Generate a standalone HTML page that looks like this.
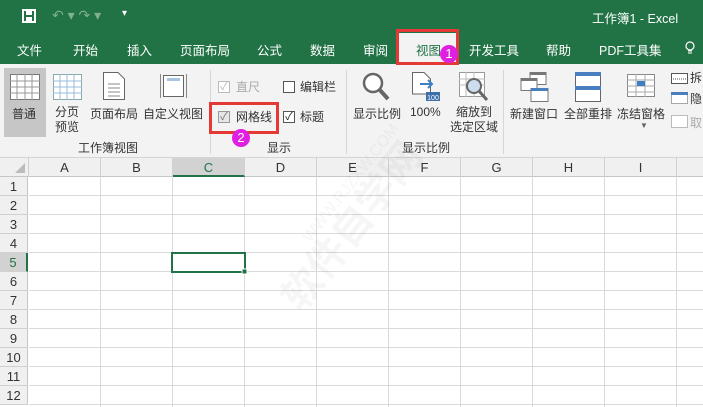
<!DOCTYPE html><html><head><meta charset="utf-8"><style>
*{margin:0;padding:0;box-sizing:border-box}
body{width:703px;height:407px;overflow:hidden;position:relative;background:#fff;font-family:"Liberation Sans","Noto Sans CJK SC",sans-serif;font-size:12px;color:#222}
.a{position:absolute}
.top{left:0;top:0;width:703px;height:64px;background:#217346;color:#fff}
.tab{position:absolute;top:40px;font-size:12.5px;color:#fff}
.rib{left:0;top:64px;width:703px;height:94px;background:#f3f3f3;border-bottom:1px solid #d4d4d4}
.lbl{position:absolute;font-size:12px;color:#333;white-space:nowrap}
.sep{position:absolute;top:6px;width:1px;height:84px;background:#d6d6d6}
.cb{position:absolute;width:12px;height:12px;border:1px solid #555;background:#fff;font-size:11px;line-height:10px;text-align:center}
.hdr{left:0;top:158px;width:703px;height:19px;background:#f0f0f0;border-bottom:1px solid #c6c6c6}
.col{position:absolute;top:0;height:19px;border-right:1px solid #d0d0d0;text-align:center;font-size:13px;line-height:19px;color:#333}
.row{position:absolute;left:0;width:28px;height:19px;background:#f0f0f0;border-bottom:1px solid #d0d0d0;border-right:1px solid #c6c6c6;font-size:13px;line-height:19px;text-align:center;color:#333}
</style></head><body>
<div class="a top">
 <svg class="a" style="left:22px;top:9px" width="14" height="14"><rect x="1" y="1" width="12" height="12" fill="none" stroke="#fff" stroke-width="2"/><rect x="4" y="2" width="6" height="4" fill="#fff"/><rect x="4" y="8" width="6" height="5" fill="#fff"/></svg>
 <div class="a" style="left:52px;top:7px;color:#7fae92;font-size:14px">↶ ▾ ↷ ▾</div>
 <div class="a" style="left:122px;top:8px;font-size:10px">▾</div>
 <div class="a" style="left:592px;top:8px;font-size:12.5px">工作簿1 - Excel</div>
 <div class="tab" style="left:17px">文件</div>
 <div class="tab" style="left:73px">开始</div>
 <div class="tab" style="left:127px">插入</div>
 <div class="tab" style="left:180px">页面布局</div>
 <div class="tab" style="left:257px">公式</div>
 <div class="tab" style="left:310px">数据</div>
 <div class="tab" style="left:363px">审阅</div>
 <div class="a" style="left:398px;top:33px;width:58px;height:31px;background:#f3f3f3"></div>
 <div class="tab" style="left:416px;color:#217346">视图</div>
 <div class="tab" style="left:469px">开发工具</div>
 <div class="tab" style="left:546px">帮助</div>
 <div class="tab" style="left:599px">PDF工具集</div>
 <svg class="a" style="left:685px;top:41px" width="10" height="14"><circle cx="5" cy="5" r="4" fill="none" stroke="#fff" stroke-width="1.2"/><path d="M3 10H7M3 12H7" stroke="#fff"/></svg>
</div>
<div class="a" style="left:396px;top:29px;width:63px;height:36px;border:3px solid #e53935;z-index:5"></div>
<div class="a" style="left:440px;top:45px;width:18px;height:18px;border-radius:50%;background:#e020e0;color:#fff;font-size:13px;text-align:center;line-height:18px;z-index:6">1</div>
<div class="a rib">
 <div class="a" style="left:4px;top:4px;width:42px;height:69px;background:#c6c6c6"></div>
 <svg class="a" style="left:10px;top:10px" width="30" height="26"><rect x="0.5" y="0.5" width="29" height="25" fill="#fff" stroke="#777"/><path d="M0 7H30M0 13H30M0 19H30M7 0V26M15 0V26M22 0V26" stroke="#999"/></svg>
 <div class="lbl" style="left:12px;top:41px">普通</div>
 <svg class="a" style="left:53px;top:10px" width="29" height="26"><rect x="0.5" y="0.5" width="28" height="25" fill="#fff" stroke="#8aa"/><path d="M0 7H29M0 13H29M0 19H29M7 0V26M14 0V26M21 0V26" stroke="#9bd"/></svg>
 <div class="lbl" style="left:55px;top:41px;line-height:15px">分页<br>预览</div>
 <svg class="a" style="left:103px;top:8px" width="22" height="28"><path d="M0.5 0.5H15L21.5 7V27.5H0.5Z" fill="#fff" stroke="#666"/><path d="M5 12H17M5 16H17M5 20H17M5 24H17" stroke="#888"/></svg>
 <div class="lbl" style="left:90px;top:41px">页面布局</div>
 <svg class="a" style="left:160px;top:8px" width="27" height="28"><rect x="3.5" y="3.5" width="20" height="21" fill="#fff" stroke="#666"/><rect x="7" y="6" width="13" height="3" fill="#a8c4e0"/><path d="M0.5 2V26M26.5 2V26" stroke="#888"/></svg>
 <div class="lbl" style="left:143px;top:41px">自定义视图</div>
 <div class="lbl" style="left:78px;top:75px">工作簿视图</div>
 <div class="sep" style="left:210px"></div>
 <div class="cb" style="left:218px;top:17px;border-color:#bbb;color:#bbb">✓</div><div class="lbl" style="left:236px;top:14px;color:#aaa">直尺</div>
 <div class="cb" style="left:283px;top:17px"></div><div class="lbl" style="left:300px;top:14px">编辑栏</div>
 <div class="cb" style="left:218px;top:47px;border-color:#999;background:#e6e6e6;color:#777">✓</div><div class="lbl" style="left:236px;top:44px">网格线</div>
 <div class="cb" style="left:283px;top:47px">✓</div><div class="lbl" style="left:300px;top:44px">标题</div>
 <div class="lbl" style="left:267px;top:75px">显示</div>
 <div class="sep" style="left:346px"></div>
 <svg class="a" style="left:362px;top:8px" width="28" height="30"><circle cx="11" cy="11" r="9" fill="#fff" stroke="#666" stroke-width="2.5"/><path d="M17 17L26 27" stroke="#666" stroke-width="4"/></svg>
 <div class="lbl" style="left:353px;top:41px">显示比例</div>
 <svg class="a" style="left:412px;top:8px" width="28" height="30"><path d="M0.5 0.5H12L18.5 7V22H0.5Z" fill="#fff" stroke="#666"/><path d="M8 12H20M16 8L20 12L16 16" stroke="#3d7fc1" stroke-width="2" fill="none"/><rect x="14" y="20" width="14" height="9" fill="#3d6fa8"/><text x="21" y="28" fill="#fff" font-size="7" text-anchor="middle">100</text></svg>
 <div class="lbl" style="left:410px;top:41px">100%</div>
 <svg class="a" style="left:459px;top:8px" width="30" height="30"><rect x="0.5" y="0.5" width="25" height="24" fill="#fff" stroke="#999"/><path d="M0 7H26M0 13H26M7 0V25M15 0V25" stroke="#bbb"/><circle cx="15" cy="14" r="7" fill="#cde" stroke="#666" stroke-width="2"/><path d="M20 19L28 28" stroke="#666" stroke-width="3"/></svg>
 <div class="lbl" style="left:450px;top:41px;line-height:15px;text-align:center">缩放到<br>选定区域</div>
 <div class="lbl" style="left:402px;top:75px">显示比例</div>
 <div class="sep" style="left:503px"></div>
 <svg class="a" style="left:520px;top:8px" width="30" height="30"><rect x="10" y="0.5" width="16" height="12" fill="#fff" stroke="#777"/><rect x="10" y="0" width="16" height="3" fill="#777"/><rect x="1" y="6.5" width="16" height="12" fill="#fff" stroke="#777"/><rect x="1" y="6" width="16" height="3" fill="#777"/><rect x="11" y="16.5" width="17" height="13" fill="#fff" stroke="#777"/><rect x="11" y="16" width="17" height="3" fill="#4a7fbf"/></svg>
 <div class="lbl" style="left:510px;top:41px">新建窗口</div>
 <svg class="a" style="left:575px;top:8px" width="26" height="30"><rect x="0.5" y="0.5" width="25" height="29" fill="#fff" stroke="#666"/><rect x="0" y="0" width="26" height="4" fill="#4a7fbf"/><rect x="0" y="14" width="26" height="4" fill="#4a7fbf"/></svg>
 <div class="lbl" style="left:564px;top:41px">全部重排</div>
 <svg class="a" style="left:627px;top:10px" width="28" height="26"><rect x="0.5" y="0.5" width="27" height="22" fill="#fff" stroke="#888"/><path d="M0 6H28M0 12H28M0 18H28M9 0V23M18 0V23" stroke="#aaa"/><rect x="10" y="7" width="8" height="5" fill="#3d7fc1"/></svg>
 <div class="lbl" style="left:617px;top:41px">冻结窗格</div>
 <div class="lbl" style="left:640px;top:57px;font-size:8px;color:#666">▼</div>
 <svg class="a" style="left:671px;top:8px" width="32" height="60"><rect x="0.5" y="1.5" width="16" height="10" fill="#fff" stroke="#555"/><path d="M2 7H15" stroke="#555" stroke-dasharray="1 1"/><rect x="0.5" y="20.5" width="16" height="11" fill="#fff" stroke="#555" stroke-dasharray="1 1"/><rect x="0" y="20" width="17" height="3" fill="#4a7fbf"/><rect x="0.5" y="43.5" width="16" height="12" fill="#fff" stroke="#bbb"/></svg>
 <div class="lbl" style="left:690px;top:5px">拆</div><div class="lbl" style="left:690px;top:26px">隐</div><div class="lbl" style="left:690px;top:50px;color:#aaa">取</div>
</div>
<div class="a" style="left:209px;top:102px;width:70px;height:32px;border:3px solid #e53935;z-index:5"></div>
<div class="a" style="left:232px;top:129px;width:18px;height:18px;border-radius:50%;background:#e020e0;color:#fff;font-size:13px;text-align:center;line-height:18px;z-index:6">2</div>
<div class="a hdr">
 <div class="col" style="left:0;width:29px"><svg style="position:absolute;left:15px;top:5px" width="10" height="10"><path d="M10 0V10H0Z" fill="#bbb"/></svg></div>
 <div class="col" style="left:29px;width:72px">A</div>
 <div class="col" style="left:101px;width:72px">B</div>
 <div class="col" style="left:173px;width:72px;background:#d2d2d2;border-bottom:2px solid #217346;color:#217346">C</div>
 <div class="col" style="left:245px;width:72px">D</div>
 <div class="col" style="left:317px;width:72px">E</div>
 <div class="col" style="left:389px;width:72px">F</div>
 <div class="col" style="left:461px;width:72px">G</div>
 <div class="col" style="left:533px;width:72px">H</div>
 <div class="col" style="left:605px;width:72px">I</div>
</div>
<svg class="a" style="left:0;top:177px" width="703" height="230">
 <g stroke="#dadada" stroke-width="1">
  <path d="M100.5 0V230M172.5 0V230M244.5 0V230M316.5 0V230M388.5 0V230M460.5 0V230M532.5 0V230M604.5 0V230M676.5 0V230"/>
  <path d="M29 18.5H703M29 37.5H703M29 56.5H703M29 75.5H703M29 94.5H703M29 113.5H703M29 132.5H703M29 151.5H703M29 170.5H703M29 189.5H703M29 208.5H703M29 227.5H703"/>
 </g>
 <rect x="172" y="76" width="73" height="19" fill="none" stroke="#217346" stroke-width="2"/>
 <rect x="242" y="92" width="5" height="5" fill="#217346" stroke="#fff"/>
</svg>
<div class="row" style="top:177px">1</div><div class="row" style="top:196px">2</div><div class="row" style="top:215px">3</div><div class="row" style="top:234px">4</div>
<div class="row" style="top:253px;background:#d2d2d2;color:#217346;border-right:2px solid #217346">5</div>
<div class="row" style="top:272px">6</div><div class="row" style="top:291px">7</div><div class="row" style="top:310px">8</div><div class="row" style="top:329px">9</div><div class="row" style="top:348px">10</div><div class="row" style="top:367px">11</div><div class="row" style="top:386px">12</div>
<div class="a" style="left:265px;top:285px;transform:rotate(-52deg);transform-origin:0 0;font-size:40px;color:rgba(0,0,0,0.035);white-space:nowrap;font-weight:bold">软件自学网</div>
<div class="a" style="left:300px;top:235px;transform:rotate(-52deg);transform-origin:0 0;font-size:16px;color:rgba(0,0,0,0.04);white-space:nowrap">WWW.RJZXW.COM</div>
</body></html>
